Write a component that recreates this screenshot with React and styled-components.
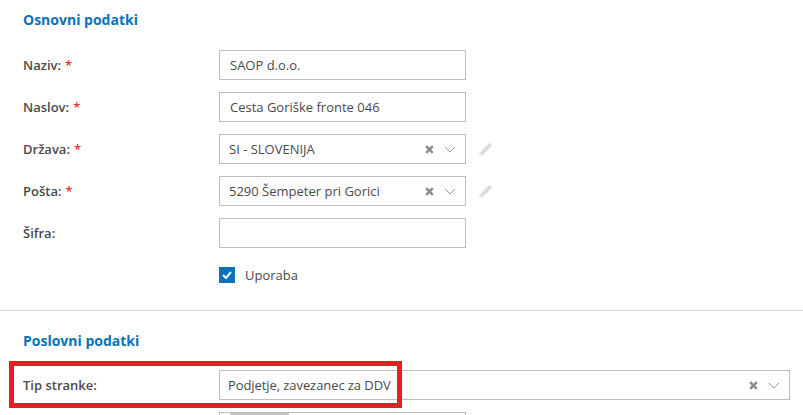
import React from "react";
import styled, { createGlobalStyle } from "styled-components";

const GlobalStyle = createGlobalStyle`
  html, body {
    margin: 0;
    padding: 0;
    background: #ffffff;
    overflow: hidden;
  }
  body {
    font-family: "Open Sans", "Liberation Sans", sans-serif;
    font-size: 13px;
    color: #4a4a4a;
  }
`;

const Page = styled.div`
  position: relative;
  width: 803px;
  height: 415px;
  overflow: hidden;
`;

const Section = styled.section`
  padding: ${(p) => p.$top}px 0 0 23px;
`;

const Divider = styled.hr`
  border: 0;
  border-top: 1px solid #d4d4d4;
  margin: 27px 0 0;
`;

const Title = styled.h2`
  margin: 0 0 ${(p) => p.$gap}px;
  font-size: 14px;
  line-height: 18px;
  font-weight: 700;
  color: #0a72ba;
`;

const Row = styled.div`
  display: flex;
  align-items: center;
  height: 30px;
  margin-bottom: 12px;
`;

const Label = styled.label`
  width: 196px;
  flex: none;
  font-weight: 600;
  color: #4a4a4a;
`;

const Star = styled.span`
  color: #ee3030;
  margin-left: 4px;
`;

const Input = styled.div`
  box-sizing: border-box;
  width: ${(p) => p.$width || 247}px;
  height: 30px;
  flex: none;
  display: flex;
  align-items: center;
  padding: 0 10px 0 ${(p) => p.$inset || 10}px;
  border: 1px solid #bdbdbd;
  background: #fff;
  color: #4a4a4a;
`;

const Value = styled.span`
  flex: 1;
  letter-spacing: ${(p) => p.$tight || 0}px;
`;

const SelectIcons = styled.span`
  display: flex;
  align-items: center;
  gap: 10px;
  margin-right: -1px;
`;

const EditButton = styled.span`
  display: flex;
  margin-left: 12px;
`;

const CheckRow = styled.div`
  display: flex;
  align-items: center;
  gap: 10px;
  height: 16px;
  margin: 19px 0 0 196px;
`;

const Checkbox = styled.span`
  width: 16px;
  height: 16px;
  background: #0a72ba;
  display: flex;
  align-items: center;
  justify-content: center;
`;

const Chip = styled.span`
  width: 59px;
  height: 28px;
  background: #c4c4c4;
`;

const Highlight = styled.div`
  position: absolute;
  left: 9px;
  top: 361px;
  width: 393px;
  height: 47px;
  box-sizing: border-box;
  border: 5px solid #ed1c24;
  pointer-events: none;
`;

const Clear = () => (
  <svg width="9" height="9" viewBox="0 0 9 9">
    <path d="M1.2 1.2 7.8 7.8M7.8 1.2 1.2 7.8" stroke="#8a8a8a" strokeWidth="2.4" />
  </svg>
);

const Chevron = () => (
  <svg width="12" height="7" viewBox="0 0 12 7" fill="none">
    <path d="M1 1l5 5 5-5" stroke="#9a9a9a" strokeWidth="1" />
  </svg>
);

const Pencil = () => (
  <svg width="15" height="15" viewBox="0 0 15 15">
    <path d="M11.4.8 14.2 3.6 4.6 13.2.9 14.1 1.8 10.4z" fill="#dcdcdc" />
    <path d="M1.8 10.4 4.6 13.2.9 14.1z" fill="#efefef" />
  </svg>
);

const Select = ({ value, width, tight, inset = 9 }) => (
  <Input $width={width} $inset={inset}>
    <Value $tight={tight}>{value}</Value>
    <SelectIcons>
      <Clear />
      <Chevron />
    </SelectIcons>
  </Input>
);

export default function App() {
  return (
    <Page>
      <GlobalStyle />
      <Section $top={11}>
        <Title $gap={21}>Osnovni podatki</Title>
        <Row>
          <Label>Naziv:<Star>*</Star></Label>
          <Input>SAOP d.o.o.</Input>
        </Row>
        <Row>
          <Label>Naslov:<Star>*</Star></Label>
          <Input>Cesta Goriške fronte 046</Input>
        </Row>
        <Row>
          <Label>Država:<Star>*</Star></Label>
          <Select value="SI - SLOVENIJA" />
          <EditButton><Pencil /></EditButton>
        </Row>
        <Row>
          <Label>Pošta:<Star>*</Star></Label>
          <Select value="5290 Šempeter pri Gorici" />
          <EditButton><Pencil /></EditButton>
        </Row>
        <Row>
          <Label>Šifra:</Label>
          <Input />
        </Row>
        <CheckRow>
          <Checkbox>
            <svg width="10" height="8" viewBox="0 0 10 8" fill="none">
              <path d="M1 4l3 3 5-6" stroke="#fff" strokeWidth="2" />
            </svg>
          </Checkbox>
          Uporaba
        </CheckRow>
      </Section>
      <Divider />
      <Section $top={21}>
        <Title $gap={20}>Poslovni podatki</Title>
        <Row>
          <Label>Tip stranke:</Label>
          <Select value="Podjetje, zavezanec za DDV" width={571} tight={-0.08} inset={8} />
        </Row>
        <Row>
          <Label />
          <Input>
            <Chip />
          </Input>
        </Row>
      </Section>
      <Highlight />
    </Page>
  );
}
